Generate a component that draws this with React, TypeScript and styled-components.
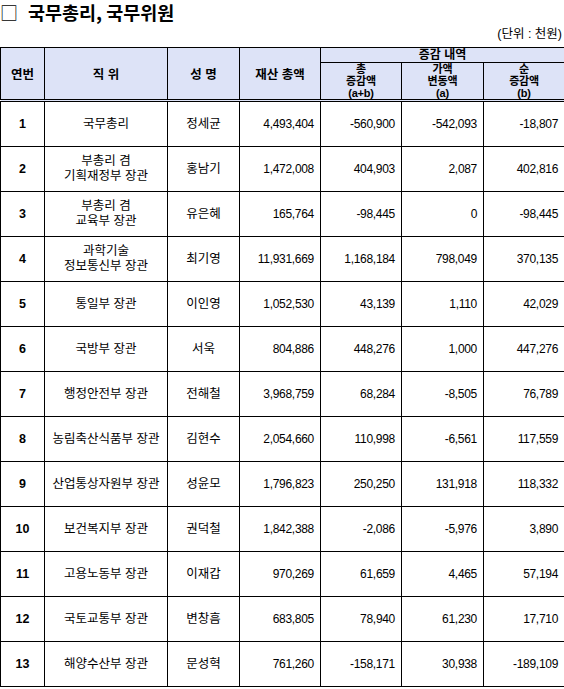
import styled, { createGlobalStyle } from "styled-components";

const GlobalStyle = createGlobalStyle`
  html, body {
    margin: 0;
    padding: 0;
    background: #fff;
  }
  body {
    font-family: "Liberation Sans", "Noto Sans CJK KR", sans-serif;
    color: #000;
  }
`;

type Row = {
  no: number;
  title: string[];
  name: string;
  total: string;
  change: string;
  price: string;
  net: string;
};

const rows: Row[] = [
  { no: 1, title: ["국무총리"], name: "정세균", total: "4,493,404", change: "-560,900", price: "-542,093", net: "-18,807" },
  { no: 2, title: ["부총리 겸", "기획재정부 장관"], name: "홍남기", total: "1,472,008", change: "404,903", price: "2,087", net: "402,816" },
  { no: 3, title: ["부총리 겸", "교육부 장관"], name: "유은혜", total: "165,764", change: "-98,445", price: "0", net: "-98,445" },
  { no: 4, title: ["과학기술", "정보통신부 장관"], name: "최기영", total: "11,931,669", change: "1,168,184", price: "798,049", net: "370,135" },
  { no: 5, title: ["통일부 장관"], name: "이인영", total: "1,052,530", change: "43,139", price: "1,110", net: "42,029" },
  { no: 6, title: ["국방부 장관"], name: "서욱", total: "804,886", change: "448,276", price: "1,000", net: "447,276" },
  { no: 7, title: ["행정안전부 장관"], name: "전해철", total: "3,968,759", change: "68,284", price: "-8,505", net: "76,789" },
  { no: 8, title: ["농림축산식품부 장관"], name: "김현수", total: "2,054,660", change: "110,998", price: "-6,561", net: "117,559" },
  { no: 9, title: ["산업통상자원부 장관"], name: "성윤모", total: "1,796,823", change: "250,250", price: "131,918", net: "118,332" },
  { no: 10, title: ["보건복지부 장관"], name: "권덕철", total: "1,842,388", change: "-2,086", price: "-5,976", net: "3,890" },
  { no: 11, title: ["고용노동부 장관"], name: "이재갑", total: "970,269", change: "61,659", price: "4,465", net: "57,194" },
  { no: 12, title: ["국토교통부 장관"], name: "변창흠", total: "683,805", change: "78,940", price: "61,230", net: "17,710" },
  { no: 13, title: ["해양수산부 장관"], name: "문성혁", total: "761,260", change: "-158,171", price: "30,938", net: "-189,109" },
];

const colWidths = [44, 123, 72, 81, 81, 82, 81];

const App = () => (
  <Page>
    <GlobalStyle />
    <Title>
      <Box>□</Box>
      국무총리, 국무위원
    </Title>
    <Unit>(단위 : 천원)</Unit>
    <Table>
      <colgroup>
        {colWidths.map((w, i) => (
          <col key={i} style={{ width: w }} />
        ))}
      </colgroup>
      <thead>
        <tr>
          <HeadCell rowSpan={2}>연번</HeadCell>
          <HeadCell rowSpan={2}>직 위</HeadCell>
          <HeadCell rowSpan={2}>성 명</HeadCell>
          <HeadCell rowSpan={2}>재산 총액</HeadCell>
          <GroupCell colSpan={3}>증감 내역</GroupCell>
        </tr>
        <tr>
          <SubCell>
            <Stack>
              <span>총</span>
              <span>증감액</span>
              <span>(a+b)</span>
            </Stack>
          </SubCell>
          <SubCell>
            <Stack>
              <span>가액</span>
              <span>변동액</span>
              <span>(a)</span>
            </Stack>
          </SubCell>
          <SubCell>
            <Stack>
              <span>순</span>
              <span>증감액</span>
              <span>(b)</span>
            </Stack>
          </SubCell>
        </tr>
      </thead>
      <tbody>
        {rows.map((r) => (
          <tr key={r.no}>
            <IndexCell>{r.no}</IndexCell>
            <TextCell>
              {r.title.map((t, i) => (
                <Line key={i}>{t}</Line>
              ))}
            </TextCell>
            <TextCell>{r.name}</TextCell>
            <NumCell>{r.total}</NumCell>
            <NumCell>{r.change}</NumCell>
            <NumCell>{r.price}</NumCell>
            <NumCell>{r.net}</NumCell>
          </tr>
        ))}
      </tbody>
    </Table>
  </Page>
);

export default App;

const Page = styled.div`
  width: 564px;
`;

const Title = styled.div`
  display: flex;
  align-items: center;
  height: 24px;
  padding-left: 0;
  font-family: "Noto Sans CJK KR", sans-serif;
  font-size: 18.5px;
  font-weight: 700;
  letter-spacing: 0;
`;

const Box = styled.span`
  display: inline-block;
  width: 28px;
  font-weight: 400;
  font-size: 18px;
`;

const Unit = styled.div`
  height: 23px;
  line-height: 20px;
  padding-right: 2px;
  text-align: right;
  font-size: 12.5px;
  font-family: "Liberation Sans", "Noto Sans CJK KR", sans-serif;
`;

const Table = styled.table`
  width: 564px;
  table-layout: fixed;
  border-collapse: collapse;
  border: 1px solid #000;
`;

const HeadCell = styled.th`
  background: #dde3f7;
  border: 1px solid #000;
  border-bottom: 3px double #000;
  padding: 0;
  font-size: 12.5px;
  font-weight: 700;
  text-align: center;
  vertical-align: middle;
  white-space: pre;
`;

const GroupCell = styled.th`
  background: #dde3f7;
  border: 1px solid #000;
  height: 14px;
  padding: 0;
  font-size: 12px;
  font-weight: 700;
  line-height: 12px;
  text-align: center;
  overflow: visible;
`;

const SubCell = styled.th`
  background: #dde3f7;
  border: 1px solid #000;
  border-bottom: 3px double #000;
  height: 36px;
  padding: 0;
  font-size: 11px;
  font-weight: 700;
  text-align: center;
`;

const Stack = styled.div`
  display: flex;
  flex-direction: column;
  align-items: center;
  height: 36px;
  justify-content: center;
  line-height: 12px;
  letter-spacing: -0.2px;
`;

const BodyCell = styled.td`
  border: 1px solid #000;
  height: 44px;
  padding: 0;
  font-size: 12.5px;
  vertical-align: middle;
`;

const IndexCell = styled(BodyCell)`
  text-align: center;
  font-weight: 700;
  font-size: 12.5px;
`;

const TextCell = styled(BodyCell)`
  text-align: center;
  line-height: 15px;
`;

const Line = styled.div``;

const NumCell = styled(BodyCell)`
  text-align: right;
  padding-right: 6px;
  font-size: 12px;
  letter-spacing: -0.3px;
`;
